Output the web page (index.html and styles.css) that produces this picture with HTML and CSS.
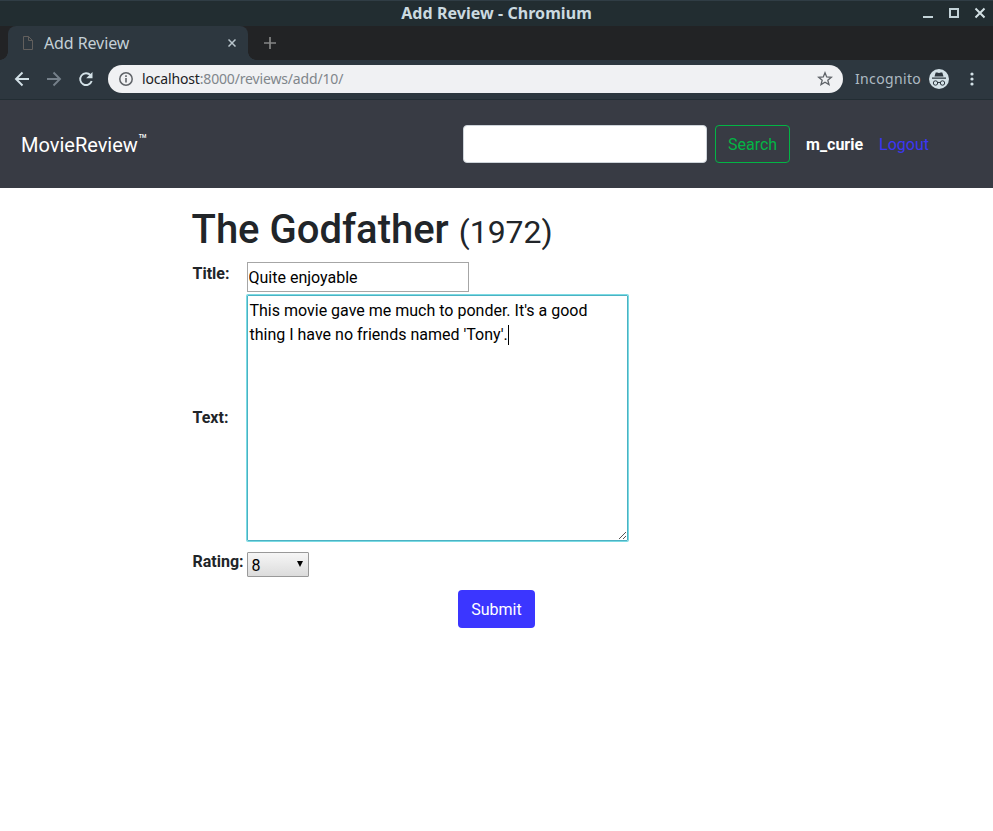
FILE: index.html
```html
<!DOCTYPE html>
<html lang="en">
<head>
<meta charset="utf-8">
<title>Add Review</title>
<link rel="stylesheet" href="styles.css">
</head>
<body>
<header class="titlebar">
  <span class="window-title">Add Review - Chromium</span>
  <svg class="window-controls" width="64" height="16" viewBox="0 0 64 16">
    <path d="M0 11h10v2H0z" fill="#c3d3d8"/>
    <rect x="27" y="4" width="8" height="8" fill="none" stroke="#c3d3d8" stroke-width="2"/>
    <path d="M52.5 3.5l9 9m0-9l-9 9" stroke="#d3e0e4" stroke-width="2"/>
  </svg>
</header>
<div class="tabstrip">
  <div class="tab">
    <svg class="favicon" width="12" height="16" viewBox="0 0 12 16"><path d="M1.500 1.500h5l4 4v9h-9zM6.500 1.500v4h4" fill="none" stroke="#625f5d"/></svg>
    <span class="tab-label">Add Review</span>
    <svg class="tab-close" width="8" height="8" viewBox="0 0 8 8"><path d="M.5.5l7 7m0-7l-7 7" stroke="#b9c5cc" stroke-width="1.500"/></svg>
  </div>
  <svg class="new-tab" width="12" height="12" viewBox="0 0 12 12"><path d="M6 0v12M0 6h12" stroke="#858686" stroke-width="1.700"/></svg>
</div>
<div class="toolbar">
  <svg class="nav-icons" width="80" height="16" viewBox="0 0 80 16">
    <path d="M15 8H2.500M8.500 1.500L2 8l6.500 6.500" fill="none" stroke="#d3e1e7" stroke-width="1.900"/>
    <path d="M33 8h12.500M39.500 1.500L46 8l-6.500 6.500" fill="none" stroke="#75808a" stroke-width="1.900"/>
    <path d="M76.500 4.200A5.900 5.900 0 1 0 77.700 10" fill="none" stroke="#d3e1e7" stroke-width="1.900"/>
    <path d="M78.500 1v6.300h-6.300z" fill="#d3e1e7"/>
  </svg>
  <div class="address">
    <svg width="14" height="14" viewBox="0 0 14 14"><circle cx="7" cy="7" r="6.200" fill="none" stroke="#5f6368" stroke-width="1.500"/><path d="M7 6v4.500M7 3.300v1.600" stroke="#5f6368" stroke-width="1.600"/></svg>
    <span class="url"><span class="host">localhost</span>:8000/reviews/add/10/</span>
    <svg class="star" width="16" height="16" viewBox="0 0 16 16"><path d="M8 1.800l1.700 4.200 4.600.3-3.500 2.900 1.200 4.400L8 11.200l-4 2.400 1.200-4.400L1.700 6.300l4.600-.3z" fill="none" stroke="#5f6368" stroke-width="1.300"/></svg>
  </div>
  <span class="incognito">Incognito</span>
  <svg class="agent" width="20" height="20" viewBox="0 0 20 20">
    <circle cx="10" cy="10" r="10" fill="#d3e1e7"/>
    <path d="M3 8.500h14v1.300H3zM5.500 7.500l1.200-4h1.500L10 4.100l1.800-.6h1.500l1.200 4z" fill="#2d373f"/>
    <g fill="none" stroke="#2d373f"><circle cx="6.500" cy="14" r="2.200"/><circle cx="13.500" cy="14" r="2.200"/><path d="M8.700 13.700q1.300-.8 2.600 0"/></g>
  </svg>
  <svg class="more" width="4" height="14" viewBox="0 0 4 14" fill="#d3e1e7"><circle cx="2" cy="2" r="1.600"/><circle cx="2" cy="7" r="1.600"/><circle cx="2" cy="12" r="1.600"/></svg>
</div>
<nav class="navbar">
  <a class="brand">MovieReview<sup>™</sup></a>
  <input class="search-field" type="text" aria-label="Search">
  <button class="search-button" type="button">Search</button>
  <span class="user">m_curie</span>
  <a class="logout">Logout</a>
</nav>
<main class="content">
  <h1>The Godfather <small>(1972)</small></h1>
  <form>
    <div class="fields">
      <label for="title">Title:</label>
      <input id="title" class="title-field" type="text" value="Quite enjoyable">
      <label for="text" class="text-label">Text:</label>
      <div class="text-field" id="text">This movie gave me much to ponder. It's a good thing I have no friends named 'Tony'.<span class="caret"></span>
        <svg class="grip" width="9" height="9" viewBox="0 0 9 9"><path d="M1 8l7-7M5 8l3-3" stroke="#555" stroke-width="1"/></svg>
      </div>
      <label>Rating:</label>
      <div class="rating">8<svg width="6" height="6" viewBox="0 0 6 6"><path d="M0 0h6L3 6z" fill="#000"/></svg></div>
    </div>
    <button class="submit" type="button">Submit</button>
  </form>
</main>
</body>
</html>
```
FILE: styles.css
```css
* { box-sizing: border-box; }
body {
  margin: 0;
  height: 831px;
  overflow: hidden;
  background: #fff;
  color: #212529;
  font: 16px/24px Roboto, sans-serif;
}
svg { display: block; flex: none; }
input, button { font: inherit; }

.titlebar, .tabstrip, .toolbar { font-family: "Noto Sans", sans-serif; }
.titlebar {
  position: relative;
  height: 26px;
  background: #222d31;
  border-top: 1px solid #303d45;
  display: flex;
  align-items: center;
  justify-content: center;
}
.window-title {
  padding-bottom: 2px;
  color: #cbdae0;
  font-weight: 700;
  font-size: 16px;
  letter-spacing: .06px;
  white-space: nowrap;
}
.window-controls { position: absolute; right: 6px; top: 4px; }

.tabstrip {
  height: 34px;
  background: #222325;
  display: flex;
  align-items: center;
  padding-left: 8px;
}
.tab {
  position: relative;
  width: 240px;
  height: 34px;
  border-radius: 8px 8px 0 0;
  background: #2d373f;
  display: flex;
  align-items: center;
  padding: 0 12px 0 14px;
}
.tab::before, .tab::after {
  content: "";
  position: absolute;
  bottom: 0;
  width: 8px;
  height: 8px;
}
.tab::before { left: -8px; background: radial-gradient(circle at 0 0, transparent 7.5px, #2d373f 8px); }
.tab::after { right: -8px; background: radial-gradient(circle at 100% 0, transparent 7.5px, #2d373f 8px); }
.tab-label { margin-left: 10px; color: #c4d0d6; font-size: 16px; letter-spacing: -.1px; white-space: nowrap; }
.tab-close { margin-left: auto; }
.new-tab { margin-left: 16px; }

.toolbar {
  height: 40px;
  padding-bottom: 1px;
  background: #2d373f;
  border-bottom: 1px solid #222d33;
  display: flex;
  align-items: center;
}
.nav-icons { margin-left: 14px; }
.address {
  width: 735px;
  height: 28px;
  margin-left: 14px;
  padding: 0 10px 0 11px;
  border-radius: 14px;
  background: #f0f1f3;
  display: flex;
  align-items: center;
}
.url { margin-left: 9px; color: #80868b; font-size: 14px; letter-spacing: -.16px; white-space: nowrap; }
.host { color: #202124; }
.star { margin-left: auto; }
.incognito { width: 66px; margin-left: 12px; color: #aebbc3; font-size: 14px; letter-spacing: .35px; white-space: nowrap; }
.agent { margin-left: 8px; }
.more { margin-left: 20.5px; }

.navbar {
  height: 88px;
  padding: 0 64px 0 21px;
  background: #383b44;
  display: flex;
  align-items: center;
}
.brand { position: relative; margin-right: auto; padding-top: 2px; color: #fff; font-size: 20px; }
.brand sup { position: absolute; left: 100%; top: 1px; font-size: 15px; line-height: 16px; }
.search-field {
  width: 244px;
  height: 38px;
  border: 1px solid #ced4da;
  border-radius: 4px;
  background: #fff;
}
.search-button {
  width: 75px;
  height: 38px;
  margin-left: 8px;
  padding: 2px 0 0;
  border: 1px solid #02b545;
  border-radius: 4px;
  background: transparent;
  color: #02b545;
}
.user { margin-left: 16px; padding-top: 2px; color: #fff; font-weight: 700; }
.logout { margin-left: 16px; padding-top: 2px; color: #3b36f5; }

.content { width: 609px; margin: 0 auto; padding-top: 18px; }
h1 { margin: 0 0 0 -.5px; font-size: 40px; font-weight: 500; line-height: 48px; }
h1 small { font-size: 32px; font-weight: 400; }
.fields {
  margin-top: 6px;
  display: grid;
  grid-template-columns: 55px 382px;
  grid-template-rows: 30px 246px 25px;
  row-gap: 3px;
}
label { padding-left: .5px; font-weight: 700; }
.text-label { align-self: center; }
.title-field {
  width: 222px;
  height: 30px;
  padding: 1px 1px 1px .5px;
  border: 1px solid #a6a6a6;
  color: #000;
}
.text-field {
  position: relative;
  width: 381px;
  height: 246px;
  padding: 3px 2px 3px 1.5px;
  border: 1px solid #4cb2c3;
  border-radius: 1px;
  box-shadow: 0 0 0 1px #7bdbe4;
  color: #000;
}
.caret { display: inline-block; width: 1px; height: 20px; background: #000; vertical-align: -5px; }
.grip { position: absolute; right: 0; bottom: 0; }
.fields label:nth-of-type(3) { margin-top: 6px; }
.rating {
  width: 62px;
  height: 25px;
  margin-top: 8px;
  padding: 2px 5px 0 3.5px;
  border: 1px solid #999;
  border-radius: 1px;
  background: linear-gradient(#f6f6f6, #dcdcdc);
  color: #000;
  display: flex;
  align-items: center;
  justify-content: space-between;
}
.rating svg { margin-top: -4px; }
.submit {
  display: block;
  width: 77px;
  height: 38px;
  margin: 21px auto 0;
  padding: 2px 0 0;
  border: 0;
  border-radius: 4px;
  background: #3b36ff;
  color: #fff;
}
```
